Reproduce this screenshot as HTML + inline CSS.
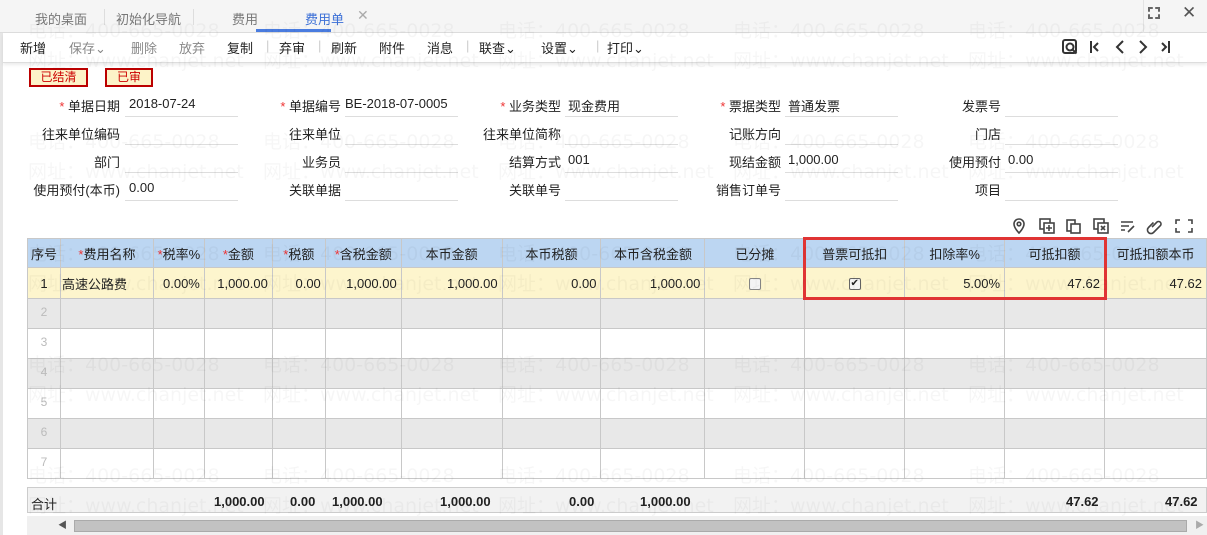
<!DOCTYPE html>
<html><head><meta charset="utf-8"><style>
*{margin:0;padding:0;box-sizing:border-box}
body{width:1207px;height:535px;overflow:hidden;background:#fff;font-family:"Liberation Sans","Noto Sans CJK SC",sans-serif;font-size:13px;color:#222;position:relative}
.a{position:absolute;white-space:nowrap}
.tabbar{left:0;top:0;width:1207px;height:33px;background:#f5f5f5;border-bottom:1px solid #ddd}
.tab{top:9px;font-size:13px;color:#777}
.tool{top:38px;font-size:13px}
.lbl{text-align:right;width:120px}
.uline{height:1px;background:#ddd}
.star{color:#e33}
table{position:absolute;left:27px;top:238px;border-collapse:collapse;table-layout:fixed}
td{border:1px solid #c8c8c8;height:30px;padding:0 4px;font-size:13px;white-space:nowrap;overflow:hidden}
tr.h td{background:#bcd6f2;text-align:center;height:29px}
tr.y td{background:#fdf5cd;text-align:right;height:31px}
tr.g td{background:#e8e8e8}
td.n{color:#bbb;font-size:12px;vertical-align:top;padding-top:6px;text-align:center}
.wm{color:rgba(0,0,0,0.035);font-size:19px;position:absolute;white-space:nowrap;font-family:"DejaVu Sans","Noto Sans CJK SC",sans-serif}
.tot{font-weight:bold;top:494px;font-size:13px}
</style></head><body>
<div class="a" style="left:0;top:0;width:3px;height:535px;background:#e6e6e6"></div>
<div class="a tabbar"></div>
<div class="a tab" style="left:35px">我的桌面</div>
<div class="a" style="left:104px;top:9px;width:1px;height:16px;background:#ddd"></div>
<div class="a tab" style="left:116px">初始化导航</div>
<div class="a" style="left:193px;top:9px;width:1px;height:16px;background:#ddd"></div>
<div class="a tab" style="left:232px">费用</div>
<div class="a tab" style="left:305px;color:#3b6fd6">费用单</div>
<div class="a tab" style="left:357px;color:#aaa;font-size:14px;top:7px">✕</div>
<div class="a" style="left:256px;top:29px;width:75px;height:3px;background:#4a7ce0"></div>
<div class="a" style="left:1143px;top:0;width:1px;height:33px;background:#e3e3e3"></div>
<div class="a" style="left:1148px;top:7px;width:12px;height:12px;border:2px solid #666;clip-path:polygon(0 0,40% 0,40% 25%,60% 25%,60% 0,100% 0,100% 40%,75% 40%,75% 60%,100% 60%,100% 100%,60% 100%,60% 75%,40% 75%,40% 100%,0 100%,0 60%,25% 60%,25% 40%,0 40%)"></div>
<div class="a" style="left:1182px;top:3px;font-size:17px;color:#555">✕</div>
<div class="a" style="left:3px;top:33px;width:1204px;height:30px;border-bottom:1px solid #ddd;box-shadow:0 2px 3px rgba(0,0,0,0.08)"></div>
<div class="a tool" style="left:20px">新增</div>
<div class="a tool" style="left:69px;color:#888">保存⌄</div>
<div class="a tool" style="left:131px;color:#888">删除</div>
<div class="a tool" style="left:179px;color:#888">放弃</div>
<div class="a tool" style="left:227px">复制</div>
<div class="a tool" style="left:266px;color:#ccc">|</div>
<div class="a tool" style="left:279px">弃审</div>
<div class="a tool" style="left:318px;color:#ccc">|</div>
<div class="a tool" style="left:331px">刷新</div>
<div class="a tool" style="left:379px">附件</div>
<div class="a tool" style="left:427px">消息</div>
<div class="a tool" style="left:466px;color:#ccc">|</div>
<div class="a tool" style="left:479px">联查⌄</div>
<div class="a tool" style="left:541px">设置⌄</div>
<div class="a tool" style="left:596px;color:#ccc">|</div>
<div class="a tool" style="left:607px">打印⌄</div>
<svg class="a" style="left:1060px;top:37px" width="120" height="20" viewBox="0 0 120 20" fill="none" stroke="#333" stroke-width="2">
<rect x="3" y="3" width="13" height="13" rx="2"/><circle cx="10" cy="10" r="3.5"/><path d="M12.5 12.5l4 4"/>
<path d="M31 4v12M38 6l-4 4 4 4"/>
<path d="M63 4l-6 6 6 6"/><path d="M80 4l6 6-6 6"/>
<path d="M102 6l4 4-4 4M109 4v12"/></svg>
<div class="a" style="left:29px;top:68px;width:59px;height:19px;border:2px solid #b00;background:#fdf3c8;color:#c00;text-align:center;line-height:15px;font-size:12px">已结清</div>
<div class="a" style="left:105px;top:68px;width:48px;height:19px;border:2px solid #b00;background:#fdf3c8;color:#c00;text-align:center;line-height:15px;font-size:12px">已审</div>

<div class="a lbl" style="left:0;top:96px"><span class="star">* </span>单据日期</div><div class="a" style="left:129px;top:96px">2018-07-24</div>
<div class="a lbl" style="left:221px;top:96px"><span class="star">* </span>单据编号</div><div class="a" style="left:345px;top:96px">BE-2018-07-0005</div>
<div class="a lbl" style="left:441px;top:96px"><span class="star">* </span>业务类型</div><div class="a" style="left:568px;top:96px">现金费用</div>
<div class="a lbl" style="left:661px;top:96px"><span class="star">* </span>票据类型</div><div class="a" style="left:788px;top:96px">普通发票</div>
<div class="a lbl" style="left:881px;top:96px">发票号</div>
<div class="a lbl" style="left:0;top:124px">往来单位编码</div>
<div class="a lbl" style="left:221px;top:124px">往来单位</div>
<div class="a lbl" style="left:441px;top:124px">往来单位简称</div>
<div class="a lbl" style="left:661px;top:124px">记账方向</div>
<div class="a lbl" style="left:881px;top:124px">门店</div>
<div class="a lbl" style="left:0;top:152px">部门</div>
<div class="a lbl" style="left:221px;top:152px">业务员</div>
<div class="a lbl" style="left:441px;top:152px">结算方式</div><div class="a" style="left:568px;top:152px">001</div>
<div class="a lbl" style="left:661px;top:152px">现结金额</div><div class="a" style="left:788px;top:152px">1,000.00</div>
<div class="a lbl" style="left:881px;top:152px">使用预付</div><div class="a" style="left:1008px;top:152px">0.00</div>
<div class="a lbl" style="left:0;top:180px">使用预付(本币)</div><div class="a" style="left:129px;top:180px">0.00</div>
<div class="a lbl" style="left:221px;top:180px">关联单据</div>
<div class="a lbl" style="left:441px;top:180px">关联单号</div>
<div class="a lbl" style="left:661px;top:180px">销售订单号</div>
<div class="a lbl" style="left:881px;top:180px">项目</div>
<div class="a uline" style="left:125px;top:116px;width:113px"></div><div class="a uline" style="left:345px;top:116px;width:113px"></div><div class="a uline" style="left:565px;top:116px;width:113px"></div><div class="a uline" style="left:785px;top:116px;width:113px"></div><div class="a uline" style="left:1005px;top:116px;width:113px"></div>
<div class="a uline" style="left:125px;top:144px;width:113px"></div><div class="a uline" style="left:345px;top:144px;width:113px"></div><div class="a uline" style="left:565px;top:144px;width:113px"></div><div class="a uline" style="left:785px;top:144px;width:113px"></div><div class="a uline" style="left:1005px;top:144px;width:113px"></div>
<div class="a uline" style="left:125px;top:172px;width:113px"></div><div class="a uline" style="left:345px;top:172px;width:113px"></div><div class="a uline" style="left:565px;top:172px;width:113px"></div><div class="a uline" style="left:785px;top:172px;width:113px"></div><div class="a uline" style="left:1005px;top:172px;width:113px"></div>
<div class="a uline" style="left:125px;top:200px;width:113px"></div><div class="a uline" style="left:345px;top:200px;width:113px"></div><div class="a uline" style="left:565px;top:200px;width:113px"></div><div class="a uline" style="left:785px;top:200px;width:113px"></div><div class="a uline" style="left:1005px;top:200px;width:113px"></div>

<svg class="a" style="left:1010px;top:217px" width="190" height="18" viewBox="0 0 190 18" fill="none" stroke="#444" stroke-width="1.6">
<path d="M9 16s-5-5-5-9a5 5 0 0 1 10 0c0 4-5 9-5 9z"/><circle cx="9" cy="7" r="1.8"/>
<rect x="30" y="2" width="10" height="10"/><rect x="34" y="6" width="10" height="10" fill="#fff"/><path d="M39 8v6M36 11h6"/>
<rect x="57" y="3" width="8" height="11"/><rect x="61" y="7" width="9" height="9" fill="#fff"/>
<rect x="84" y="2" width="10" height="10"/><rect x="88" y="6" width="10" height="10" fill="#fff"/><path d="M91 9l4 4M95 9l-4 4"/>
<path d="M111 5h12M111 9h8M111 13h4M118 15l6-6"/>
<path d="M142 10l5-5a2.5 2.5 0 0 1 3.5 3.5l-7 7a3.5 3.5 0 0 1-5-5l5-5"/>
<path d="M166 7V3h4M178 3h4v4M182 11v4h-4M170 15h-4v-4"/></svg>

<table>
<colgroup><col style="width:33px"><col style="width:93px"><col style="width:51px"><col style="width:68px"><col style="width:53px"><col style="width:76px"><col style="width:101px"><col style="width:99px"><col style="width:104px"><col style="width:100px"><col style="width:100px"><col style="width:100px"><col style="width:100px"><col style="width:102px"></colgroup>
<tr class="h"><td style="padding:0">序号</td><td><span class="star">*</span>费用名称</td><td style="padding:0"><span class="star">*</span>税率%</td><td><span class="star">*</span>金额</td><td><span class="star">*</span>税额</td><td style="padding:0"><span class="star">*</span>含税金额</td><td>本币金额</td><td>本币税额</td><td>本币含税金额</td><td>已分摊</td><td>普票可抵扣</td><td>扣除率%</td><td>可抵扣额</td><td style="padding:0">可抵扣额本币</td></tr>
<tr class="y"><td style="text-align:center">1</td><td style="text-align:left;padding-left:1px">高速公路费</td><td>0.00%</td><td>1,000.00</td><td>0.00</td><td>1,000.00</td><td>1,000.00</td><td>0.00</td><td>1,000.00</td><td style="text-align:center"><span style="display:inline-block;width:12px;height:12px;border:1px solid #888;border-radius:2px;background:#f4f4f4;vertical-align:middle"></span></td><td style="text-align:center"><span style="display:inline-block;width:12px;height:12px;border:1px solid #666;border-radius:2px;background:#f4f4f4;vertical-align:middle;font-size:10px;line-height:10px;text-align:center">✔</span></td><td>5.00%</td><td>47.62</td><td>47.62</td></tr>
<tr class="g"><td class="n">2</td><td></td><td></td><td></td><td></td><td></td><td></td><td></td><td></td><td></td><td></td><td></td><td></td><td></td></tr>
<tr><td class="n">3</td><td></td><td></td><td></td><td></td><td></td><td></td><td></td><td></td><td></td><td></td><td></td><td></td><td></td></tr>
<tr class="g"><td class="n">4</td><td></td><td></td><td></td><td></td><td></td><td></td><td></td><td></td><td></td><td></td><td></td><td></td><td></td></tr>
<tr><td class="n">5</td><td></td><td></td><td></td><td></td><td></td><td></td><td></td><td></td><td></td><td></td><td></td><td></td><td></td></tr>
<tr class="g"><td class="n">6</td><td></td><td></td><td></td><td></td><td></td><td></td><td></td><td></td><td></td><td></td><td></td><td></td><td></td></tr>
<tr><td class="n">7</td><td></td><td></td><td></td><td></td><td></td><td></td><td></td><td></td><td></td><td></td><td></td><td></td><td></td></tr>
</table>
<div class="a" style="left:803px;top:237px;width:304px;height:63px;border:3px solid #e03434"></div>

<div class="a" style="left:27px;top:487px;width:1180px;height:26px;background:#f2f2f2;border:1px solid #ccc"></div>
<div class="a" style="left:31px;top:494px">合计</div>
<div class="a tot" style="left:214px">1,000.00</div>
<div class="a tot" style="left:290px">0.00</div>
<div class="a tot" style="left:332px">1,000.00</div>
<div class="a tot" style="left:440px">1,000.00</div>
<div class="a tot" style="left:569px">0.00</div>
<div class="a tot" style="left:640px">1,000.00</div>
<div class="a tot" style="left:1066px">47.62</div>
<div class="a tot" style="left:1165px">47.62</div>
<div class="a" style="left:27px;top:516px;width:1180px;height:19px;background:#f0f0f0"></div>
<div class="a" style="left:58px;top:518px;font-size:9px;color:#555">◀</div>
<div class="a" style="left:74px;top:520px;width:1113px;height:12px;background:#c2c2c2;border:1px solid #aaa"></div>
<div class="a" style="left:1195px;top:518px;font-size:9px;color:#aaa">▶</div>

<div class="wm" style="left:28px;top:16px">电话：400-665-0028</div><div class="wm" style="left:263px;top:16px">电话：400-665-0028</div><div class="wm" style="left:498px;top:16px">电话：400-665-0028</div><div class="wm" style="left:733px;top:16px">电话：400-665-0028</div><div class="wm" style="left:968px;top:16px">电话：400-665-0028</div>
<div class="wm" style="left:28px;top:46px">网址：www.chanjet.net</div><div class="wm" style="left:263px;top:46px">网址：www.chanjet.net</div><div class="wm" style="left:498px;top:46px">网址：www.chanjet.net</div><div class="wm" style="left:733px;top:46px">网址：www.chanjet.net</div><div class="wm" style="left:968px;top:46px">网址：www.chanjet.net</div>
<div class="wm" style="left:28px;top:127px">电话：400-665-0028</div><div class="wm" style="left:263px;top:127px">电话：400-665-0028</div><div class="wm" style="left:498px;top:127px">电话：400-665-0028</div><div class="wm" style="left:733px;top:127px">电话：400-665-0028</div><div class="wm" style="left:968px;top:127px">电话：400-665-0028</div>
<div class="wm" style="left:28px;top:157px">网址：www.chanjet.net</div><div class="wm" style="left:263px;top:157px">网址：www.chanjet.net</div><div class="wm" style="left:498px;top:157px">网址：www.chanjet.net</div><div class="wm" style="left:733px;top:157px">网址：www.chanjet.net</div><div class="wm" style="left:968px;top:157px">网址：www.chanjet.net</div>
<div class="wm" style="left:28px;top:239px">电话：400-665-0028</div><div class="wm" style="left:263px;top:239px">电话：400-665-0028</div><div class="wm" style="left:498px;top:239px">电话：400-665-0028</div><div class="wm" style="left:733px;top:239px">电话：400-665-0028</div><div class="wm" style="left:968px;top:239px">电话：400-665-0028</div>
<div class="wm" style="left:28px;top:269px">网址：www.chanjet.net</div><div class="wm" style="left:263px;top:269px">网址：www.chanjet.net</div><div class="wm" style="left:498px;top:269px">网址：www.chanjet.net</div><div class="wm" style="left:733px;top:269px">网址：www.chanjet.net</div><div class="wm" style="left:968px;top:269px">网址：www.chanjet.net</div>
<div class="wm" style="left:28px;top:350px">电话：400-665-0028</div><div class="wm" style="left:263px;top:350px">电话：400-665-0028</div><div class="wm" style="left:498px;top:350px">电话：400-665-0028</div><div class="wm" style="left:733px;top:350px">电话：400-665-0028</div><div class="wm" style="left:968px;top:350px">电话：400-665-0028</div>
<div class="wm" style="left:28px;top:380px">网址：www.chanjet.net</div><div class="wm" style="left:263px;top:380px">网址：www.chanjet.net</div><div class="wm" style="left:498px;top:380px">网址：www.chanjet.net</div><div class="wm" style="left:733px;top:380px">网址：www.chanjet.net</div><div class="wm" style="left:968px;top:380px">网址：www.chanjet.net</div>
<div class="wm" style="left:28px;top:461px">电话：400-665-0028</div><div class="wm" style="left:263px;top:461px">电话：400-665-0028</div><div class="wm" style="left:498px;top:461px">电话：400-665-0028</div><div class="wm" style="left:733px;top:461px">电话：400-665-0028</div><div class="wm" style="left:968px;top:461px">电话：400-665-0028</div>
<div class="wm" style="left:28px;top:491px">网址：www.chanjet.net</div><div class="wm" style="left:263px;top:491px">网址：www.chanjet.net</div><div class="wm" style="left:498px;top:491px">网址：www.chanjet.net</div><div class="wm" style="left:733px;top:491px">网址：www.chanjet.net</div><div class="wm" style="left:968px;top:491px">网址：www.chanjet.net</div>
</body></html>
